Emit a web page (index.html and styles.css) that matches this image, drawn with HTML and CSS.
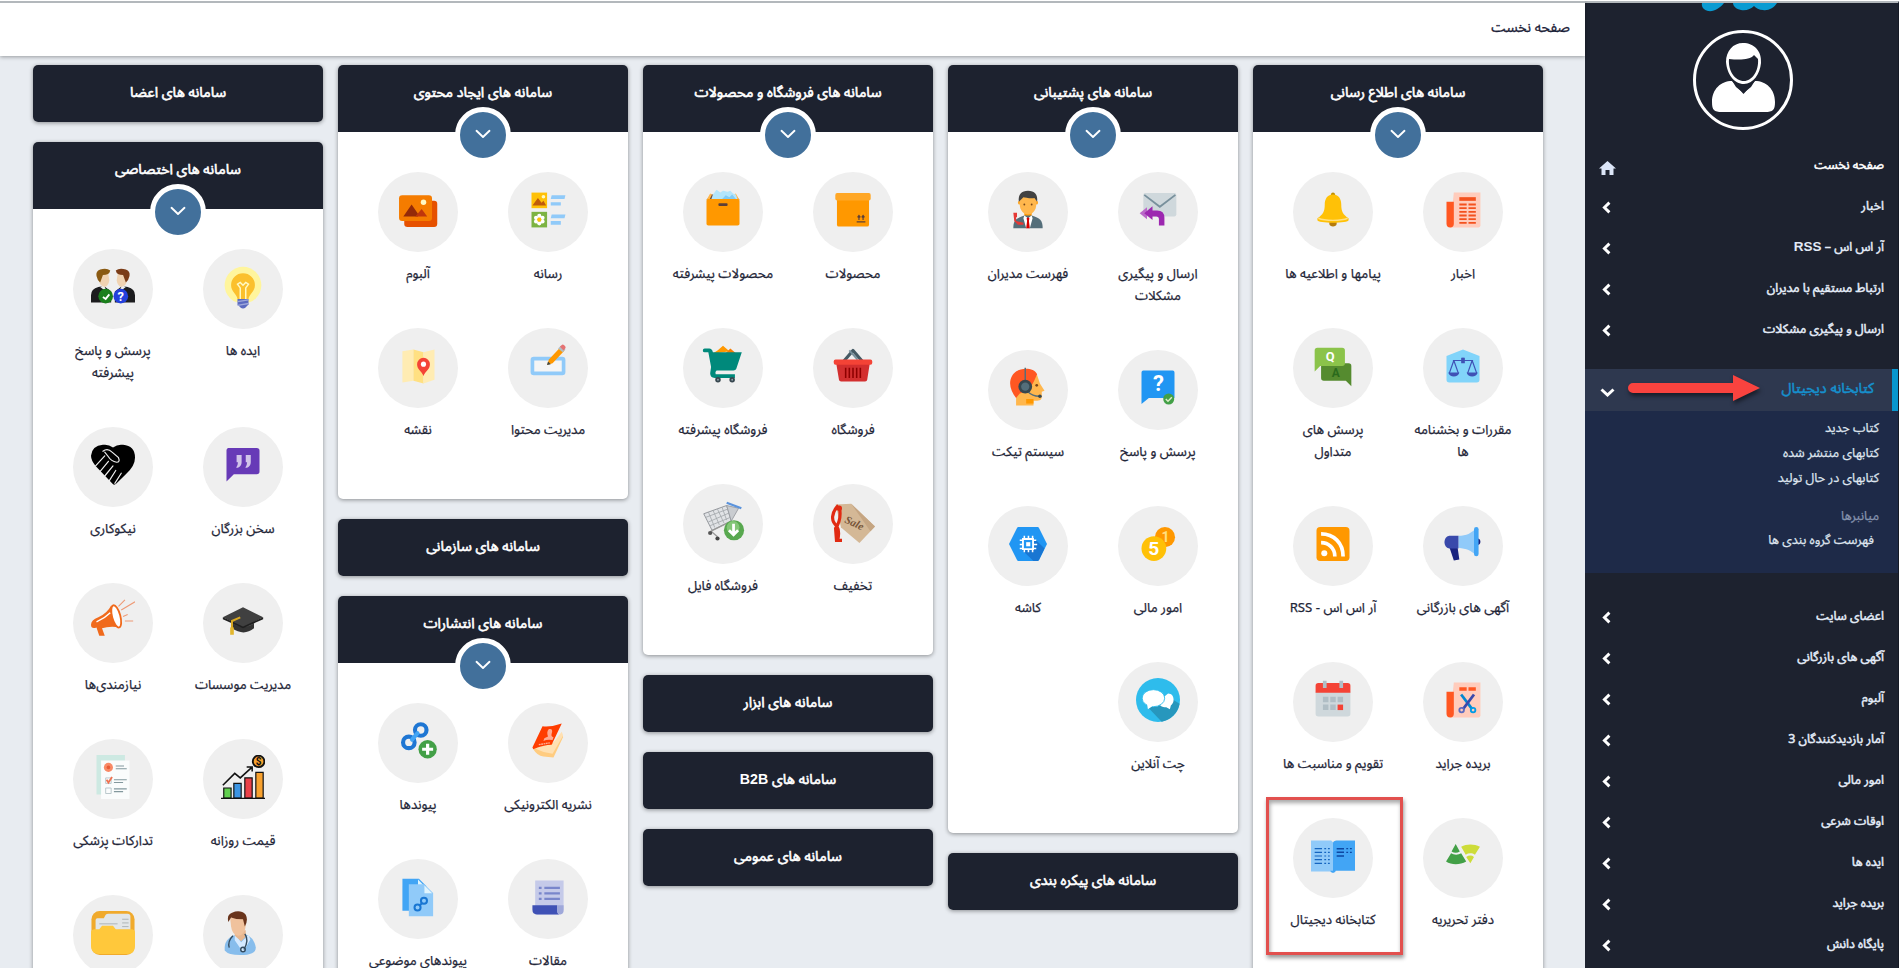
FILE: index.html
```html
<!DOCTYPE html>
<html lang="fa" dir="rtl">
<head>
<meta charset="utf-8">
<title>صفحه نخست</title>
<link rel="stylesheet" href="styles.css">
</head>
<body>
<svg class="defs" width="0" height="0" aria-hidden="true">
  <symbol id="prev" viewBox="0 0 9 13"><path d="M7.4 1.6 2.4 6.5l5 4.9" fill="none" stroke="#fff" stroke-width="2.9"/></symbol>
  <symbol id="down" viewBox="0 0 16 10"><path d="M1.5 1.8 8 8l6.500-6.200" fill="none" stroke="#fff" stroke-width="1.900" stroke-linecap="round" stroke-linejoin="round"/></symbol>
</svg>
<div class="page">
  <aside class="sidebar">
    <svg class="logo" viewBox="0 0 80 9"><g fill="#0a9bd2"><path d="M2 0h22C20 5 14 9 8 8 4 7 1 4 2 0z"/><path d="M33 0h44C74 5 68 8 63 7 59 7 56 5 54 3 51 6 46 8 41 7 36 6 33 3 33 0z"/></g></svg>
    <svg class="avatar" viewBox="0 0 100 100"><circle cx="50" cy="50" r="48.500" fill="none" stroke="#fff" stroke-width="3"/><path fill="#fff" d="M39 51c-11 0-20 8-20 21 0 8 2 10 10 10h43c8 0 10-2 10-10 0-13-9-21-20-21L50.500 64z"/><path fill="#1d222f" d="M38 49h25l-5 8-7.500 6L43 57z"/><path fill="#fff" fill-rule="evenodd" d="M50 13c11 0 19 8 18 20-1 11-8 21-17 21-10 0-17-10-18-22 0-11 7-19 17-19zM36 29c-1 12 6 22 15 22 8 0 15-10 14-22l-4-4c-4 5-14 5-25 4z"/></svg>
    <nav class="menu">
      <a class="item first"><span>صفحه نخست</span><svg class="home" viewBox="0 0 17 14"><path fill="#dce6f8" d="M8.500 0 0 7.500h2.500V14h4V9h4v5h4V7.500H17z"/></svg></a>
      <a class="item"><span>اخبار</span><svg class="chev"><use href="#prev"/></svg></a>
      <a class="item"><span>آر اس اس – <em>RSS</em></span><svg class="chev"><use href="#prev"/></svg></a>
      <a class="item"><span>ارتباط مستقیم با مدیران</span><svg class="chev"><use href="#prev"/></svg></a>
      <a class="item"><span>ارسال و پیگیری مشکلات</span><svg class="chev"><use href="#prev"/></svg></a>
    </nav>
    <div class="open">
      <span>کتابخانه دیجیتال</span>
      <svg class="arrow" viewBox="0 0 132 26"><path fill="#f9433f" d="M5 8h100V0l27 13-27 13v-8H5a5 5 0 0 1 0-10z"/></svg>
      <svg class="chevdown" viewBox="0 0 15 9"><path d="M1.500 1.500 7.500 7l6-5.500" fill="none" stroke="#fff" stroke-width="3"/></svg>
    </div>
    <div class="sub">
      <a>کتاب جدید</a>
      <a>کتابهای منتشر شده</a>
      <a>کتابهای در حال تولید</a>
      <span class="caption">میانبرها</span>
      <a class="short">فهرست گروه بندی ها</a>
    </div>
    <nav class="menu rest">
      <a class="item"><span>اعضای سایت</span><svg class="chev"><use href="#prev"/></svg></a>
      <a class="item"><span>آگهی های بازرگانی</span><svg class="chev"><use href="#prev"/></svg></a>
      <a class="item"><span>آلبوم</span><svg class="chev"><use href="#prev"/></svg></a>
      <a class="item"><span>آمار بازدیدکنندگان 3</span><svg class="chev"><use href="#prev"/></svg></a>
      <a class="item"><span>امور مالی</span><svg class="chev"><use href="#prev"/></svg></a>
      <a class="item"><span>اوقات شرعی</span><svg class="chev"><use href="#prev"/></svg></a>
      <a class="item"><span>ایده ها</span><svg class="chev"><use href="#prev"/></svg></a>
      <a class="item"><span>بریده جراید</span><svg class="chev"><use href="#prev"/></svg></a>
      <a class="item"><span>پایگاه دانش</span><svg class="chev"><use href="#prev"/></svg></a>
    </nav>
  </aside>

  <div class="main">
    <header class="topbar"><h1>صفحه نخست</h1></header>
    <main class="columns">

      <div class="col">
        <section class="card">
          <h2 class="head">سامانه های اطلاع رسانی<i class="toggle"><svg><use href="#down"/></svg></i></h2>
          <div class="tiles">
            <a class="tile"><span class="disc"><svg viewBox="0 0 48 48"><path fill="#ffccbc" d="M14 5h29v36a2 2 0 0 1-2 2H10z"/><path fill="#ff5722" d="M6 15h8v24a4 4 0 0 1-8 0z"/><path fill="#f4511e" d="M20 10h18v4H20z"/><path stroke="#f4511e" stroke-width="2" stroke-dasharray="8 2" d="M20 18h18M20 22h18M20 26h18M20 30h18M20 34h18M20 38h18"/></svg></span><b>اخبار</b></a>
            <a class="tile"><span class="disc"><svg viewBox="0 0 48 48"><circle cx="24" cy="7" r="2.200" fill="#bf8f00"/><path fill="#b57b0b" d="M20 36h8v3c0 4-8 4-8 0z"/><path fill="#ffc107" d="M24 7c-7 0-9 6-9 11 0 8-2 11-8 15v2c0 2 8 3 17 3s17-1 17-3v-2c-6-4-8-7-8-15 0-5-2-11-9-11z"/><path fill="none" stroke="#ffe082" stroke-width="1.500" d="M8 33c7 3 25 3 32 0"/></svg></span><b>پیامها و اطلاعیه ها</b></a>
            <a class="tile"><span class="disc"><svg viewBox="0 0 48 48"><path fill="#81d4fa" d="M24 6 42 13v26a3 3 0 0 1-3 3H9a3 3 0 0 1-3-3V13z"/><g fill="none" stroke="#3f51b5" stroke-width="1.300"><path d="M13 18h22M24 15v5M14 18 9 32M14 18l5 14M34 18l-5 14M34 18l5 14"/></g><path fill="#3f51b5" d="M8 31h12c-1 6-11 6-12 0zM28 31h12c-1 6-11 6-12 0zM22 15h4v6h-4z"/></svg></span><b>مقررات و بخشنامه<br>ها</b></a>
            <a class="tile"><span class="disc"><svg viewBox="0 0 48 48"><path fill="#558b2f" d="M11 21h30a3 3 0 0 1 3 3v22l-6-6H14a3 3 0 0 1-3-3z"/><path fill="#8bc34a" d="M7 4h27a3 3 0 0 1 3 3v14a3 3 0 0 1-3 3H10l-6 6V7a3 3 0 0 1 3-3z"/><text x="21" y="19" class="ltr" font-size="14" font-weight="700" fill="#fff">Q</text><text x="27" y="36" class="ltr" font-size="13" font-weight="700" fill="#2a6a1c">A</text></svg></span><b>پرسش های<br>متداول</b></a>
            <a class="tile"><span class="disc"><svg viewBox="0 0 48 48"><path fill="#1a237e" d="M40 18c4 0 4 7 0 7zM9 27h9l2 14-6 1z"/><path fill="#90caf9" d="M19 15c9 0 14-3 19-8v29c-5-5-10-7-19-8z"/><path fill="#42a5f5" d="M36 8a2.500 2.500 0 0 1 5 0v27a2.500 2.500 0 0 1-5 0z"/><path fill="#3949ab" d="M9 15h10v14H9c-7-1-7-13 0-14z"/></svg></span><b>آگهی های بازرگانی</b></a>
            <a class="tile"><span class="disc"><svg viewBox="0 0 48 48"><rect x="6" y="5.500" width="36" height="37" rx="4" fill="#ff9800"/><circle cx="14.500" cy="34" r="3.300" fill="#fff"/><path fill="none" stroke="#fff" stroke-width="4" d="M11 22.500c8 0 15 6 15 15M11 13c14 0 24 10 24 24.500"/></svg></span><b>آر اس اس - RSS</b></a>
            <a class="tile"><span class="disc"><svg viewBox="0 0 48 48"><path fill="#ffccbc" d="M14 5h29v36a2 2 0 0 1-2 2H10z"/><path fill="#ff5722" d="M6 15h8v24a4 4 0 0 1-8 0zM20 10h8v4h-8zM30 10h8v4h-8z"/><path stroke="#0288d1" stroke-width="3" d="M22 18 34 34"/><path stroke="#3949ab" stroke-width="3" d="M36 18 24 34"/><g fill="none" stroke-width="2"><circle cx="22.500" cy="35" r="2.500" stroke="#5c6bc0"/><circle cx="35" cy="35" r="2.500" stroke="#039be5"/></g></svg></span><b>بریده جراید</b></a>
            <a class="tile"><span class="disc"><svg viewBox="0 0 48 48"><path fill="#cfd8dc" d="M5 15h38v24a3 3 0 0 1-3 3H8a3 3 0 0 1-3-3z"/><path fill="#f44336" d="M8 5.500h32a3 3 0 0 1 3 3V16H5V8.500a3 3 0 0 1 3-3z"/><path fill="#b0bec5" d="M13 3h4v8h-4zM31 3h4v8h-4zM13 20.500h6v6h-6zM21 20.500h6v6h-6zM29 20.500h6v6h-6zM13 29h6v6h-6zM21 29h6v6h-6z"/><path fill="#f44336" d="M29 29h6v6h-6z"/></svg></span><b>تقویم و مناسبت ها</b></a>
            <a class="tile"><span class="disc"><svg viewBox="0 0 48 48"><path fill="#43a047" d="M16 11l-4.500 8c3 2 6 2 9 0zM11 21 5.500 30c6 4 15 4 22 0L22 21c-3 2-8 2-11 0z"/><path fill="#cddc39" d="M22 14c6-3.500 14-3.500 20.500 0L37 22.500c-3-2-7-2-10 0zM27.500 25c3-2 6-2 8.500 0l-4 7z"/></svg></span><b>دفتر تحریریه</b></a>
            <a class="tile marked"><span class="disc"><svg viewBox="0 0 48 48"><path fill="#90caf9" d="M0 7h22l3 3v31H0z"/><path fill="#42a5f5" d="M24 10c0-2 2-3 4-3h20v33H27c-1 3-5 3-6 0h3z"/><g stroke="#1565c0" stroke-width="1.300"><path d="M4 16h8M4 20h8M4 24h8M4 28h8M4 32h8"/><path stroke-dasharray="2 2" d="M14.500 16h6M14.500 20h6M14.500 24h6M14.500 28h6M14.500 32h6"/><path stroke="#0d47a1" stroke-width="1.600" d="M28 16h8M28 20h8M28 24h8"/><path stroke="#0d47a1" stroke-dasharray="2 2" d="M38.500 16h6M38.500 20h6"/></g></svg></span><b>کتابخانه دیجیتال</b></a>
          </div>
        </section>
      </div>

      <div class="col">
        <section class="card">
          <h2 class="head">سامانه های پشتیبانی<i class="toggle"><svg><use href="#down"/></svg></i></h2>
          <div class="tiles">
            <a class="tile"><span class="disc"><svg viewBox="0 0 48 48"><rect x="8" y="5.500" width="36" height="25.500" rx="2" fill="#cfd8dc"/><path fill="none" stroke="#78909c" stroke-width="2" d="M9 7.500 26 20.500 43 7.500"/><path fill="#ba68c8" d="M12 21v13L4 27.500z"/><path fill="#9c27b0" d="M18 20v4.500h5q8 0 8 8V41h-6v-7q0-3-3-3h-4v4l-9-7.500z"/></svg></span><b>ارسال و پیگیری<br>مشکلات</b></a>
            <a class="tile"><span class="disc"><svg viewBox="0 0 48 48"><path fill="#ff9800" d="M20 24h8v9h-8z"/><path fill="#546e7a" d="M8 44c0-9 3-11 12-14h8c9 3 12 5 12 14z"/><path fill="#fff" d="m20 30 4 3 4-3 1 3-3 11h-4l-3-11z"/><path fill="#d50000" d="m22.500 33 1.500-1 1.500 1-.5 3 1 8h-4l1-8z"/><circle cx="15" cy="16" r="2" fill="#ffa726"/><circle cx="33" cy="16" r="2" fill="#ffa726"/><path fill="#ffb74d" d="M15 9h18v9c0 6-4 11-9 11s-9-5-9-11z"/><path fill="#424242" d="M14 15c-1-8 3-12 10-12s11 4 10 12l-3-4c-5 1-10-1-12-1z"/><circle cx="20" cy="18" r="1" fill="#784719"/><circle cx="28" cy="18" r="1" fill="#784719"/><path fill="#e53935" d="M8 27h4v5h-1v4l8 2v2h-6l-4-4z"/></svg></span><b>فهرست مدیران</b></a>
            <a class="tile"><span class="disc"><svg viewBox="0 0 48 48"><path fill="#2196f3" d="M8 5h32a2 2 0 0 1 2 2v28H14l-8 6.500V7a2 2 0 0 1 2-2z"/><text x="24.500" y="27" class="ltr" font-size="24" font-weight="700" fill="#fff">?</text><circle cx="35.700" cy="36" r="6" fill="#43a047"/><path fill="none" stroke="#dcedc8" stroke-width="1.600" d="m32.500 36 2.400 2.400 4.200-4.200"/></svg></span><b>پرسش و پاسخ</b></a>
            <a class="tile"><span class="disc"><svg viewBox="0 0 48 48"><path fill="#ffb74d" d="M20 10h14l3 9 5 8-3 1v5c0 5-3 5-9 5v5H11V30z"/><path fill="#ff9800" d="M22 36h8v5h-8z"/><path fill="#ff5722" d="M34 9C30 1 13 1 7 10c-5 8-2 17 4 25l4-5 8-3c6-5 8-12 11-18z"/><path fill="none" stroke="#546e7a" stroke-width="1.600" d="M21 2v15M24 28c4 4 7 5 12 5"/><circle cx="21" cy="22.500" r="7.500" fill="#37474f"/><circle cx="21" cy="22.500" r="4.500" fill="#546e7a"/><circle cx="33.500" cy="21" r="1.500" fill="#784719"/><circle cx="37" cy="33" r="2" fill="#37474f"/></svg></span><b>سیستم تیکت</b></a>
            <a class="tile"><span class="disc"><svg viewBox="0 0 48 48"><circle cx="31.600" cy="16.500" r="11" fill="#ff9800"/><text x="32" y="22" class="ltr" font-size="15" font-weight="700" fill="#ffe082">1</text><circle cx="19.500" cy="29" r="13.500" fill="#ffc107"/><text x="19.500" y="36.500" class="ltr" font-size="21" font-weight="700" fill="#fff">5</text></svg></span><b>امور مالی</b></a>
            <a class="tile"><span class="disc"><svg viewBox="0 0 48 48"><path fill="#2196f3" d="M13.500 5.500h21q1 0 1.500 1L44.700 24 36 41.500q-.5 1-1.500 1h-21q-1 0-1.500-1L3.300 24 12 6.500q.5-1 1.500-1z"/><path fill="#1976d2" d="m31 18 11 11-6 12.500-1.500 1H30L17 30z"/><path fill="none" stroke="#fff" stroke-width="1.700" d="M20 15v18M24.500 15v4M24.500 29v4M29 15v18M15 20h18M15 24.500h4M30 24.500h4M15 29h18"/><path fill="#2196f3" stroke="#fff" stroke-width="2" d="M18.500 18.500h11v11h-11z"/><path fill="#fff" d="M22 22h4.500v4.500H22z"/></svg></span><b>کاشه</b></a>
            <a class="tile"><span class="disc"><svg viewBox="0 0 48 48"><circle cx="24" cy="24" r="24" fill="#2ebcec"/><path fill="#2797bd" d="M14 33 27 17l14 7 6.500 4A24 24 0 0 1 28 47.600z"/><path fill="#fff" d="M35 17c4 0 6 3 6 7 0 3-2 5-3 6l-1 4-4-2c-5 0-8-2-8-7z"/><ellipse cx="19" cy="22" rx="12.300" ry="9.300" fill="#fff" stroke="#2ebcec" stroke-width="1"/><path fill="#fff" d="m12 28 1 6 6-4z"/></svg></span><b>چت آنلاین</b></a>
          </div>
        </section>
        <section class="card closed"><h2 class="head">سامانه های پیکره بندی</h2></section>
      </div>

      <div class="col">
        <section class="card">
          <h2 class="head">سامانه های فروشگاه و محصولات<i class="toggle"><svg><use href="#down"/></svg></i></h2>
          <div class="tiles">
            <a class="tile"><span class="disc"><svg viewBox="0 0 48 48"><path fill="#ff9800" d="M6.500 12h35v28a2 2 0 0 1-2 2h-31a2 2 0 0 1-2-2z"/><rect x="4.700" y="5.500" width="38.600" height="8" rx="2" fill="#ffa726"/><path fill="none" stroke="#5d4037" stroke-width="1.300" d="M28 37h9.500M30.500 35v-5M35 35v-5M29 32l1.500-2 1.500 2M33.500 32l1.500-2 1.500 2"/></svg></span><b>محصولات</b></a>
            <a class="tile"><span class="disc"><svg viewBox="0 0 48 48"><path fill="#6d4c41" d="m6 13 5-6h26l5 6z"/><path fill="#ffb74d" d="m6 13 4-7 2 1-3 6zM42 13l-4-7-2 1 3 6z"/><path fill="#b3e5fc" d="m11 13 2-6 4-5 4 3 3-2 5 1 3-1 3 3 3 1 2 6z"/><path fill="#81cbf5" d="m22 13 5-5 4 2 3-3 5 6z"/><rect x="6" y="12" width="36" height="29" rx="2" fill="#ff9800"/><rect x="19" y="16.500" width="10" height="3" rx="1" fill="#5d4037"/></svg></span><b>محصولات پیشرفته</b></a>
            <a class="tile"><span class="disc"><svg viewBox="0 0 48 48"><path fill="none" stroke="#455a64" stroke-width="3.500" stroke-linejoin="round" d="m13 20 11-13 11 13"/><path stroke="#78909c" stroke-width="2" d="m20 7 9 10"/><path fill="#d32f2f" d="M5.500 20h37l-3 19q-.3 2-2.300 2H11q-2 0-2.300-2z"/><rect x="3" y="17" width="42" height="5.500" rx="2" fill="#f44336"/><path stroke="#8e0000" stroke-width="1.700" d="M16 26v11M20 26v11M24 26v11M28 26v11M32 26v11"/></svg></span><b>فروشگاه</b></a>
            <a class="tile"><span class="disc"><svg viewBox="0 0 48 48"><path fill="#ff9800" d="m12 11 6-4 6-5 7 6z"/><path fill="#f57c00" d="m26 11 6-6 7 6z"/><path fill="#00897b" d="M4 5h5q3 0 4 4h31.500l-6 18q-.7 2-3 2H17q-2 1-1 4h21v4H15q-5 0-5-5l1-7L8 9H4a2 2 0 0 1 0-4z"/><circle cx="18.500" cy="39" r="3" fill="#37474f"/><circle cx="34" cy="39" r="3" fill="#37474f"/><circle cx="18.500" cy="39" r="1" fill="#90a4ae"/><circle cx="34" cy="39" r="1" fill="#90a4ae"/></svg></span><b>فروشگاه پیشرفته</b></a>
            <a class="tile"><span class="disc"><svg viewBox="0 0 48 48"><path fill="#d4b896" d="M5 5 22 4l26 25-17 18L11 30z"/><path fill="#c5a582" d="m22 4 26 25-5 5z"/><text x="25" y="29" class="script" transform="rotate(25 25 26)">Sale</text><path fill="none" stroke="#e12a12" stroke-width="3.500" d="M8 6C0 14 0 23 6 28q4 6 1 17M9 7q3 14-4 24l1 13h6"/><circle cx="9" cy="9" r="3" fill="#e12a12"/></svg></span><b>تخفیف</b></a>
            <a class="tile"><span class="disc"><svg viewBox="0 0 48 48"><path fill="#e1e3e6" stroke="#8d9196" stroke-width="1" d="m3 15 25-9 5 17-21 10z"/><path fill="none" stroke="#a3a7ab" stroke-width=".9" d="m8 13 7 17M13 11l7 16M18 10l7 15M23 8l5 14M5 19l24-9M8 24l23-10M10 28l22-9"/><path fill="#c9ccd0" stroke="#999da2" stroke-width="1" d="m28 6 13 3-8 14z"/><path fill="none" stroke="#999" stroke-width="1.500" d="M33 23 11 34l7 6"/><path fill="none" stroke="#5b93dc" stroke-width="2.600" d="m28 3 16 6"/><circle cx="10" cy="36" r="2.300" fill="#555"/><circle cx="18" cy="42" r="2.300" fill="#444"/><circle cx="36" cy="33" r="11" fill="#58a84f"/><circle cx="35" cy="30" r="7" fill="#83c677"/><path fill="none" stroke="#fff" stroke-width="3" d="M35.500 26v12m-5-5 5 5 5-5"/></svg></span><b>فروشگاه فایل</b></a>
          </div>
        </section>
        <section class="card closed"><h2 class="head">سامانه های ابزار</h2></section>
        <section class="card closed"><h2 class="head">سامانه های <em>B2B</em></h2></section>
        <section class="card closed"><h2 class="head">سامانه های عمومی</h2></section>
      </div>

      <div class="col">
        <section class="card">
          <h2 class="head">سامانه های ایجاد محتوی<i class="toggle"><svg><use href="#down"/></svg></i></h2>
          <div class="tiles">
            <a class="tile"><span class="disc"><svg viewBox="0 0 48 48"><path fill="#ffc107" d="M6 5h17v17H6z"/><path fill="#bf5b0a" d="m7 19 6-8 4 5 2-2 3 5z"/><circle cx="19" cy="9.500" r="2" fill="#fff9c4"/><path fill="#7cb342" d="M6 26h17v17H6z"/><g fill="#fff"><circle cx="14.500" cy="30.500" r="2.300"/><circle cx="14.500" cy="38.500" r="2.300"/><circle cx="11" cy="32.500" r="2.300"/><circle cx="18" cy="32.500" r="2.300"/><circle cx="11" cy="36.500" r="2.300"/><circle cx="18" cy="36.500" r="2.300"/></g><circle cx="14.500" cy="34.500" r="2.300" fill="#ffc107"/><path fill="#90caf9" d="M28 8h15l-1 4H27zM27 15.500h11V19H27zM28 29h15l-1 4H27zM27 36h11v4H27z"/></svg></span><b>رسانه</b></a>
            <a class="tile"><span class="disc"><svg viewBox="0 0 48 48"><rect x="9" y="14" width="36" height="28.500" rx="3.500" fill="#e65100"/><rect x="3.300" y="8" width="36" height="28" rx="3.500" fill="#f57c00"/><circle cx="30" cy="15.500" r="3" fill="#fff9c4"/><path fill="#942a09" d="m8 31 9-13 7 10v3z"/><path fill="#bf360c" d="m21 31 7-8 6 8z"/></svg></span><b>آلبوم</b></a>
            <a class="tile"><span class="disc"><svg viewBox="0 0 48 48"><rect x="7" y="16" width="34" height="16" rx="1.500" fill="#f5f5f5" stroke="#90caf9" stroke-width="4"/><path fill="#ff9800" d="m25 17 13-14 4 4-13 14-6 2z"/><path fill="#b0bec5" d="m35 5 3-3 5 4-3 3z"/><path fill="#e57373" d="m37 3 2-2q1-1 3 .5t1 3L41 7z"/><path fill="#37474f" d="m24 19-1 4 4-1z"/></svg></span><b>مدیریت محتوا</b></a>
            <a class="tile"><span class="disc"><svg viewBox="0 0 48 48"><path fill="#ffecb3" d="m7 8 12-2v34L7 42z"/><path fill="#ffe082" d="m19 6 11 3v34l-11-3z"/><path fill="#ffecb3" d="m30 9 12-3v33l-12 4z"/><path fill="#f44336" d="M30 15a7 7 0 0 0-7 7c0 6 5 7 7 13 2-6 7-7 7-13a7 7 0 0 0-7-7z"/><circle cx="30" cy="22" r="2.800" fill="#fff"/></svg></span><b>نقشه</b></a>
          </div>
        </section>
        <section class="card closed"><h2 class="head">سامانه های سازمانی</h2></section>
        <section class="card">
          <h2 class="head">سامانه های انتشارات<i class="toggle"><svg><use href="#down"/></svg></i></h2>
          <div class="tiles">
            <a class="tile"><span class="disc"><svg viewBox="0 0 48 48"><path fill="#ffcc80" d="M8 33 30 26l10-8 .5 1.500L30 42l-11-1q-7-1-11-8z"/><path fill="#ffe0b2" d="m9 32 20-5 10-13 1.500 4L29 38q-10-1-20-6z"/><path fill="#ff3d00" d="M18 8q10 1 21-3L28 28q-9 0-20 5l-1-2z"/><path fill="#ffab91" d="M25 11q5-1 3 5-1 3 2 4l-1 3q-6-1-10 1l1-3 4-2q-2-5 1-8z"/><path stroke="#ffab91" stroke-width="1.500" stroke-dasharray="2 .6" d="m14 28 12-2"/></svg></span><b>نشریه الکترونیکی</b></a>
            <a class="tile"><span class="disc"><svg viewBox="0 0 48 48"><g fill="none" stroke="#1e76d3" stroke-width="4.500"><circle cx="27" cy="12" r="6.300"/><circle cx="14" cy="25.500" r="6.300"/></g><path stroke="#42a5f5" stroke-width="4.500" stroke-linecap="round" d="m17.500 22.500 6-7"/><circle cx="34.500" cy="33" r="10" fill="#43a047"/><path stroke="#fff" stroke-width="3.500" d="M34.500 27v12M28.500 33h12"/></svg></span><b>پیوندها</b></a>
            <a class="tile"><span class="disc"><svg viewBox="0 0 48 48"><path fill="#c5cae9" d="M10 6h31v32q0 5-5 5H10z"/><path fill="#3f51b5" d="M7 33h27v6q0 4 3 4H12q-5 0-5-5z"/><path fill="#9fa8da" d="M34 33h7v5q0 5-3.500 5T34 38z"/><path stroke="#7986cb" stroke-width="2.500" d="M14 14h3M20 14h17M14 20h3M20 20h17M14 26h3M20 26h17"/></svg></span><b>مقالات</b></a>
            <a class="tile"><span class="disc"><svg viewBox="0 0 48 48"><path fill="#42a5f5" d="M7 4h18l8 8v27H7z"/><path fill="#e1f5fe" d="m24 5 8 8h-8z"/><path fill="#90caf9" d="M14 10h17l9.500 9.500V45H14z"/><path fill="#e1f5fe" d="M31 11.500 39.500 20H31z"/><g fill="none" stroke="#1976d2" stroke-width="2.200"><circle cx="30.500" cy="28" r="3.300"/><circle cx="23.500" cy="35.500" r="3.300"/><path d="m25.500 33.500 3-3"/></g></svg></span><b>پیوندهای موضوعی</b></a>
          </div>
        </section>
      </div>

      <div class="col">
        <section class="card closed"><h2 class="head">سامانه های اعضا</h2></section>
        <section class="card">
          <h2 class="head">سامانه های اختصاصی<i class="toggle"><svg><use href="#down"/></svg></i></h2>
          <div class="tiles">
            <a class="tile"><span class="disc"><svg viewBox="0 0 48 48"><circle cx="24" cy="22" r="20" fill="#fff59d"/><path fill="#fbc02d" d="M24 9a13 13 0 0 0-13 13c0 7 6 9 7 15h12c1-6 7-8 7-15A13 13 0 0 0 24 9z"/><path fill="none" stroke="#fff9c4" stroke-width="1.600" d="M21 37V25l-3-4 3-2 3 3 3-3 3 2-3 4v12"/><path fill="#5c6bc0" d="M18 37h12v6l-3 3q-3 3-6 0l-3-3z"/><path stroke="#9fa8da" stroke-width="1.500" d="m18 40 12-2M18 44l12-2"/></svg></span><b>ایده ها</b></a>
            <a class="tile"><span class="disc"><svg viewBox="0 0 48 48"><path fill="#1c1c1e" d="M0 41V33q0-7 8-9l6-1 8 6v12zM48 41V33q0-7-8-9l-6-1-8 6v12z"/><path fill="#eee" d="m10 24 4-2 4 8zM38 24l-4-2-4 8z"/><path fill="#f0d3b2" d="M9 12q5-4 10-2l1 7q-1 6-5 7-5-1-6-6zM39 12q-5-4-10-2l-1 7q1 6 5 7 5-1 6-6z"/><path fill="#8a5a12" d="M6 12q-1-5 4-7 7-2 11 1-1 5-8 5l-3 8q-3-2-4-7z"/><path fill="#7b3c17" d="M42 12q1-5-4-7-7-2-11 1 1 5 8 5l3 8q3-2 4-7z"/><circle cx="16" cy="34" r="8" fill="#1a7f1c"/><circle cx="32.500" cy="34" r="8" fill="#2340dc"/><path fill="none" stroke="#fff" stroke-width="2" d="m13 35 3 2 4-5"/><text x="32.500" y="39" class="ltr" font-size="14" font-weight="700" fill="#fff">?</text></svg></span><b>پرسش و پاسخ<br>پیشرفته</b></a>
            <a class="tile"><span class="disc"><svg viewBox="0 0 48 48"><path fill="#673ab7" d="M8 5.500h31a3 3 0 0 1 3 3V31a3 3 0 0 1-3 3H14l-8 8V8a2.500 2.500 0 0 1 2-2.500z"/><path fill="#d1c4e9" d="M17 13h5.500v8q0 4-4 6h-2q2-3 2-6H17zM27 13h5.500v8q0 4-4 6h-2q2-3 2-6H27z"/></svg></span><b>سخن بزرگان</b></a>
            <a class="tile"><span class="disc"><svg viewBox="0 0 48 48"><path d="M24 5q5-4 11-3 13 1 13 14 0 9-10 18L28 44q-3 3-5 0L5 25Q0 19 0 14 1 3 13 2q6-1 11 3z"/><path fill="none" stroke="#eee" stroke-width="1.300" stroke-linecap="round" d="M13 9q5-4 10 1l7 6q2 5-2 5-6-1-9-6l-4-5M5 25 15 14M10 31l9-11M15 36l9-11M20 41l7-11M26 44l7-11"/></svg></span><b>نیکوکاری</b></a>
            <a class="tile"><span class="disc"><svg viewBox="0 0 48 48"><path fill="#333" d="M12 21h24v11q-11 9-24 0z"/><path fill="#606060" d="M13 25q11 6 23 0v2q-11 7-23 0z"/><path fill="#404040" d="m24 9 22 11-22 11L2 20z"/><path fill="#202020" d="m2 20 22 10 22-10v2L24 32 2 22z"/><path fill="none" stroke="#d6a620" stroke-width="2.200" d="m21 20-9 4v10"/><path fill="#e2b62d" d="M10 31h4v8h-4z"/></svg></span><b>مدیریت موسسات</b></a>
            <a class="tile"><span class="disc"><svg viewBox="0 0 48 48"><path fill="#f06a1c" d="M22 7q-4 8-14 13-8 3-8 8t6 3l3 9h6l-3-8q8-3 20-1z"/><ellipse cx="27.500" cy="19" rx="4.500" ry="12.500" transform="rotate(-15 27.500 19)" fill="#fff" stroke="#f06a1c" stroke-width="2"/><path fill="none" stroke="#fff" stroke-width="1.500" d="M6 25q9-4 15-10"/><path stroke="#ee9a76" stroke-width="1.200" d="m30 8 7-7M33 12 48 3M35 19l5-2M37 24h9"/></svg></span><b>نیازمندی‌ها</b></a>
            <a class="tile"><span class="disc"><svg viewBox="0 0 48 48"><g stroke="#111" stroke-width="1.300"><path fill="#61cf4f" d="M3 36h8v11H3z"/><path fill="#3c94e2" d="M14 31h8v16h-8z"/><path fill="#e94048" d="M26 25h8v22h-8z"/><path fill="#f8a12e" d="M38 19h8v28h-8z"/><circle cx="41" cy="7" r="6.300" fill="#f8a12e" stroke-width="2"/><path fill="none" d="M0 47.300h48"/><path fill="none" stroke-width="1.700" d="m2 33 13-13 6 5 12-11m-5-1h6v5"/></g><text x="41" y="11" class="ltr" font-size="11" font-weight="700" fill="#111">$</text></svg></span><b>قیمت روزانه</b></a>
            <a class="tile"><span class="disc"><svg viewBox="0 0 48 48"><path fill="#cde9e2" d="M6 0h31v43H6z"/><path fill="#fafcfc" d="M11 6h31v42H11z"/><circle cx="19" cy="13.500" r="5" fill="#f88a66"/><circle cx="19" cy="13.500" r="2" fill="#e85b36"/><path stroke="#83989d" stroke-width="1.200" d="M27 12h9M27 15h12M25 27h14M25 30h10M25 37h14M25 40h10"/><path fill="none" stroke="#b6c4c8" d="M16 25h6v6h-6zM16 36h6v6h-6z"/><path fill="none" stroke="#ef7351" stroke-width="2" d="m17 27 2 3 4-6"/></svg></span><b>تدارکات پزشکی</b></a>
            <a class="tile"><span class="disc"><svg viewBox="0 0 48 48"><path fill="#87bdec" d="M4 43q-1-13 12-17l10-1q10 3 12 15 0 8-17 8-13 0-17-5z"/><path fill="#d5eaff" d="m15 25 7 9 8-8 2 5-8 14-9-13z"/><path fill="#e8b78f" d="M15 21h12v7l-5 5-7-6z"/><path fill="#f0c29d" d="M10 8q7-6 16-1l1 9q-1 10-8 11-7-1-8-10z"/><path fill="#69341c" d="M8 12Q6 4 12 2q9-4 15 2 3 6-1 13l-2-8q-8 0-13-2z"/><path fill="none" stroke="#344b5e" stroke-width="1.500" d="M13 27q-6 6-4 13M26 25q5 7-1 17"/><circle cx="24" cy="42" r="2.500" fill="none" stroke="#344b5e" stroke-width="1.500"/></svg></span></a>
            <a class="tile"><span class="disc"><svg viewBox="0 0 48 48"><rect x=".5" width="47" height="48" rx="9" fill="#f0aa2c"/><path fill="#e2e6e8" d="M5 10q0-2 2-2h7l2-4q1-1 3-1h21q3 0 3 3v22H5z"/><path fill="none" stroke="#a9b1b4" stroke-width="1" d="M9 14h20M34 9h7M34 13h7M34 17h7M30 21h12"/><path fill="#ffc83b" d="M0 24q0-4 4-4h5l3-4h12l3 4h17q4 0 4 4v14q0 9-8 9H9q-9 0-9-9z"/></svg></span></a>
          </div>
        </section>
      </div>
    </main>
  </div>
</div>
</body>
</html>
```
FILE: styles.css
```css
*, *::after { box-sizing: border-box; }
html, body { height: 100%; }
body {
  margin: 0;
  overflow: hidden;
  background: #e8ecf1;
  font-family: "Noto Sans Arabic", Vazirmatn, "DejaVu Sans", "Liberation Sans", sans-serif;
  color: #1c2238;
}
em { font-style: normal; font-weight: 700; font-family: "Liberation Sans", sans-serif; -webkit-text-stroke: 0; }
.defs { position: absolute; }
.page {
  display: flex;
  height: 968px;
  border-top: 1px solid #fff;
  overflow: hidden;
}

/* sidebar */
.sidebar {
  display: flex;
  flex-direction: column;
  width: 314px;
  flex: none;
  background: #1d222f;
  border-top: 2px solid #b3b8bc;
  border-right: 1px solid #161a25;
}
.logo { display: block; width: 80px; height: 9px; margin: 0 118px 0 0; flex: none; }
.avatar { display: block; width: 100px; height: 100px; margin: 18px 105px 0 0; flex: none; }
.menu { padding: 15px 14px 0 16px; }
.item {
  display: flex;
  align-items: center;
  justify-content: space-between;
  height: 41px;
  font-size: 12.400px;
  color: #e3ebf7;
  -webkit-text-stroke: .5px;
  white-space: nowrap;
}
.item span { line-height: 20px; margin-bottom: 2px; }
.item em { font-size: 13.500px; }
.item.first { color: #fff; }
.chev { width: 9px; height: 13px; margin-left: 1px; margin-top: 1px; flex: none; }
.home { width: 17px; height: 14px; margin-left: -2px; margin-top: 4px; }
.open {
  display: flex;
  align-items: center;
  height: 42px;
  margin-top: 19px;
  flex: none;
  padding: 0 18px 0 15px;
  background: #2e384f;
  border-right: 6px solid #0896ce;
  font-size: 14.400px;
  color: #1690cd;
  -webkit-text-stroke: .5px;
  white-space: nowrap;
}
.open span { width: 94px; margin-bottom: 3px; }
.arrow { width: 132px; height: 26px; margin: 0 20px 4px 0; flex: none; overflow: visible; filter: drop-shadow(1px 3px 2px rgba(0, 0, 0, .5)); }
.chevdown { width: 15px; height: 9px; margin-right: auto; margin-top: 5px; }
.sub {
  display: flex;
  flex-direction: column;
  height: 162px;
  flex: none;
  padding: 5px 19px 0 0;
  background: #1e2a48;
  font-size: 12.600px;
  line-height: 25px;
  color: #dfe5ef;
  -webkit-text-stroke: .25px;
}
.caption { margin-top: 13px; line-height: 24px; color: #8592ad; }
.short { padding-right: 5px; line-height: 24px; }
.rest { padding-top: 23px; }
.rest .chev { margin-top: 2px; }

/* main area */
.main { flex: 1; min-width: 0; }
.topbar {
  position: relative;
  height: 55px;
  padding: 0 15px;
  background: #fff;
  border-top: 2px solid #b3b8bc;
  box-shadow: 0 1px 4px rgba(0, 0, 0, .35);
}
.topbar h1 { margin: 0; font-size: 14px; font-weight: 400; line-height: 50px; -webkit-text-stroke: .3px; }
.columns { display: flex; align-items: flex-start; gap: 15px; padding: 9px 42px 0 33px; }
.col { display: flex; flex-direction: column; gap: 20px; width: 290px; flex: none; }
.card { background: #fff; border-radius: 5px; box-shadow: 0 1px 4px rgba(0, 0, 0, .4); }
.head {
  position: relative;
  height: 67px;
  margin: 0;
  border-radius: 5px 5px 0 0;
  background: #1d222f;
  color: #fff;
  font-size: 14.200px;
  font-weight: 400;
  line-height: 55px;
  text-align: center;
  white-space: nowrap;
  -webkit-text-stroke: .6px;
}
.closed .head { height: 57px; border-radius: 5px; }
.toggle {
  position: absolute;
  left: 117px;
  top: 42px;
  display: flex;
  align-items: center;
  justify-content: center;
  width: 56px;
  height: 56px;
  border: 5px solid #fff;
  border-radius: 50%;
  background: #42709b;
}
.toggle svg { width: 16px; height: 10px; margin-top: -2px; }
.tiles { display: grid; grid-template-columns: 130px 130px; padding: 40px 15px 15px; }
.tile { position: relative; display: flex; flex-direction: column; align-items: center; padding-bottom: 43px; }
.disc { display: block; width: 80px; height: 80px; padding: 16px 18px; border-radius: 50%; background: #efefef; }
.disc svg { display: block; width: 44px; height: 44px; }
.disc text { text-anchor: middle; direction: ltr; }
.ltr { font-family: Roboto, "Liberation Sans", sans-serif; }
.script { font: italic 700 12px "Liberation Serif", serif; fill: #765539; }
.tile b {
  display: block;
  margin-top: 11px;
  font-size: 13.200px;
  font-weight: 400;
  line-height: 22px;
  text-align: center;
  white-space: nowrap;
  color: #1f2638;
  -webkit-text-stroke: .25px;
}
.marked::after {
  content: "";
  position: absolute;
  left: -2px;
  top: -21px;
  width: 137px;
  height: 158px;
  border: 3px solid #e2504e;
  box-shadow: 1px 3px 4px rgba(0, 0, 0, .4), inset 1px 3px 4px rgba(0, 0, 0, .35);
}
```
